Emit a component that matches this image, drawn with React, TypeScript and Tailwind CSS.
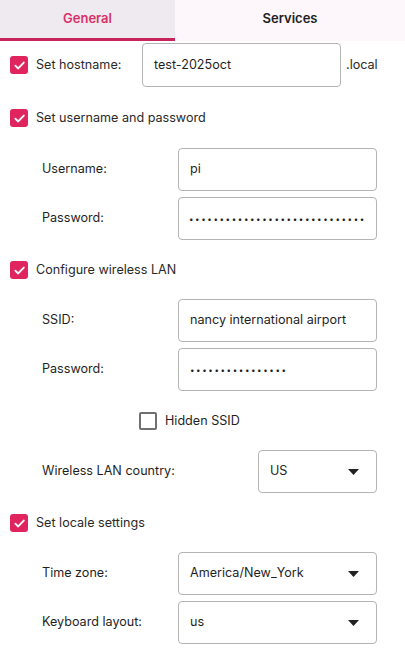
import React from 'react';

const font = { fontFamily: 'Inter, "Noto Sans", sans-serif' };

function Check({ checked }: { checked: boolean }) {
  return checked ? (
    <span className="flex h-[18px] w-[18px] shrink-0 items-center justify-center rounded-[3px] bg-[#e0245e]">
      <svg width="13" height="13" viewBox="0 0 14 14" fill="none">
        <path d="M2.5 7.2 L5.6 10.2 L11.6 3.8" stroke="white" strokeWidth="2" strokeLinecap="round" strokeLinejoin="round" />
      </svg>
    </span>
  ) : (
    <span className="h-[18px] w-[18px] shrink-0 rounded-[2px] border-2 border-[#6f6f6f] bg-white" />
  );
}

function Box({ children, className = '' }: { children?: React.ReactNode; className?: string }) {
  return (
    <div
      className={`flex h-[43px] items-center rounded-[4px] border border-[#b4b4b4] bg-white px-[11px] text-[12.6px] text-[#1f1f1f] ${className}`}
    >
      {children}
    </div>
  );
}

function Caret() {
  return (
    <svg width="11" height="6" viewBox="0 0 11 6" className="ml-auto mr-[6px]">
      <path d="M0 0 L11 0 L5.5 6 Z" fill="#222" />
    </svg>
  );
}

function SectionToggle({ label }: { label: string }) {
  return (
    <div className="flex h-[36px] items-center gap-[8px]">
      <Check checked />
      <span className="text-[12.6px] text-[#2a2a2a]">{label}</span>
    </div>
  );
}

function Field({ label, children }: { label: string; children: React.ReactNode }) {
  return (
    <div className="flex items-center">
      <span className="w-[168px] pl-[32px] text-[12.6px] text-[#1f1f1f]">{label}</span>
      <div className="w-[199px]">{children}</div>
    </div>
  );
}

function Dots({ n }: { n: number }) {
  return <span className="text-[8px] leading-none tracking-[1.6px]">{'•'.repeat(n)}</span>;
}

export default function App() {
  return (
    <div className="h-[666px] w-[405px] overflow-hidden bg-white" style={font}>
      <div className="flex h-[41px]">
        <div className="flex w-[175px] items-center justify-center border-b-[3px] border-[#c8235a] bg-[#efeaef] text-[13px] font-semibold text-[#d9306a]">
          General
        </div>
        <div className="flex flex-1 items-center justify-center bg-[#fdf7fb] pb-[3px] text-[13px] font-semibold text-[#222]">
          Services
        </div>
      </div>

      <div className="px-[10px]">
        <div className="mt-[2px] flex h-[44px] items-center">
          <Check checked />
          <span className="ml-[8px] w-[106px] text-[12.6px] text-[#2a2a2a]">Set hostname:</span>
          <Box className="h-[44px] w-[199px]">test-2025oct</Box>
          <span className="ml-[5px] text-[12.6px] text-[#2a2a2a]">.local</span>
        </div>

        <div className="mt-[13px]">
          <SectionToggle label="Set username and password" />
        </div>
        <div className="mt-[12px] flex flex-col gap-[6px]">
          <Field label="Username:">
            <Box>pi</Box>
          </Field>
          <Field label="Password:">
            <Box className="overflow-hidden whitespace-nowrap pl-[10px]">
              <Dots n={29} />
            </Box>
          </Field>
        </div>

        <div className="mt-[12px]">
          <SectionToggle label="Configure wireless LAN" />
        </div>
        <div className="mt-[11px] flex flex-col gap-[6px]">
          <Field label="SSID:">
            <Box>nancy international airport</Box>
          </Field>
          <Field label="Password:">
            <Box>
              <Dots n={16} />
            </Box>
          </Field>
        </div>

        <div className="mt-[12px] flex h-[36px] items-center pl-[129px]">
          <Check checked={false} />
          <span className="ml-[8px] text-[12.6px] text-[#1f1f1f]">Hidden SSID</span>
        </div>

        <div className="mt-[11px] flex items-center">
          <span className="w-[248px] pl-[32px] text-[12.6px] text-[#1f1f1f]">Wireless LAN country:</span>
          <Box className="w-[119px]">
            US
            <Caret />
          </Box>
        </div>

        <div className="mt-[12px]">
          <SectionToggle label="Set locale settings" />
        </div>
        <div className="mt-[11px] flex flex-col gap-[6px]">
          <Field label="Time zone:">
            <Box>
              America/New_York
              <Caret />
            </Box>
          </Field>
          <Field label="Keyboard layout:">
            <Box>
              us
              <Caret />
            </Box>
          </Field>
        </div>
      </div>
    </div>
  );
}
